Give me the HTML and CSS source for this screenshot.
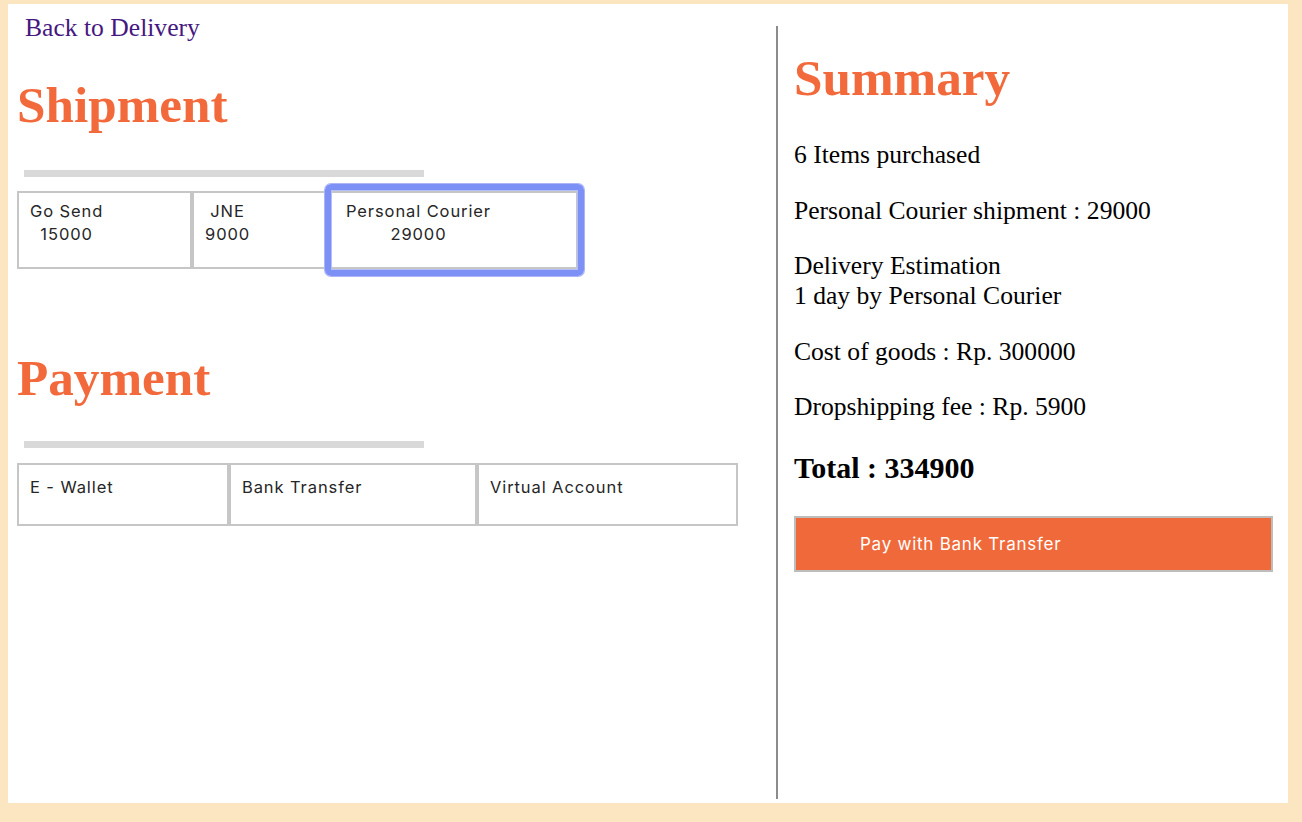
FILE: index.html
```html
<!DOCTYPE html>
<html lang="en">
<head>
<meta charset="utf-8">
<title>Checkout</title>
<link rel="stylesheet" href="styles.css">
</head>
<body>
<div class="page">
  <main class="left">
    <a class="back-link" href="#">Back to Delivery</a>
    <h1 class="title title--shipment">Shipment</h1>
    <div class="bar"></div>
    <div class="options options--ship">
      <button class="opt opt--gosend"><span class="opt-text">Go Send<br>15000</span></button>
      <button class="opt opt--jne"><span class="opt-text">JNE<br>9000</span></button>
      <button class="opt opt--courier is-focused"><span class="opt-text">Personal Courier<br>29000</span></button>
    </div>
    <h1 class="title title--payment">Payment</h1>
    <div class="bar"></div>
    <div class="options options--pay">
      <button class="opt opt--wallet">E - Wallet</button>
      <button class="opt opt--bank">Bank Transfer</button>
      <button class="opt opt--virtual">Virtual Account</button>
    </div>
  </main>
  <aside class="right">
    <h1 class="title title--summary">Summary</h1>
    <p class="line">6 Items purchased</p>
    <p class="line">Personal Courier shipment : 29000</p>
    <p class="line">Delivery Estimation<br>1 day by Personal Courier</p>
    <p class="line">Cost of goods : Rp. 300000</p>
    <p class="line">Dropshipping fee : Rp. 5900</p>
    <h3 class="total">Total : 334900</h3>
    <button class="pay-btn">Pay with Bank Transfer</button>
  </aside>
</div>
</body>
</html>
```

FILE: styles.css
```css
* { box-sizing: border-box; }

html, body {
  margin: 0;
  height: 822px;
}

body {
  background: #fce5c1;
  padding: 4px 14px 19px 8px;
  font-family: "Liberation Serif", "Times New Roman", serif;
  overflow: hidden;
}

.page {
  background: #ffffff;
  height: 799px;
  display: flex;
}

.left {
  width: 768px;
  padding-left: 9px;
  display: flex;
  flex-direction: column;
  align-items: flex-start;
}

.back-link {
  display: block;
  margin: 9px 0 0 8px;
  font-size: 25.6px;
  line-height: 30px;
  color: #461780;
  text-decoration: none;
}

.title {
  margin: 0;
  font-size: 51.2px;
  line-height: 59px;
  font-weight: bold;
  color: #f26a3c;
}

.title--shipment { margin-top: 32px; }
.title--payment { margin-top: 79px; }
.title--summary { margin-top: 22px; margin-bottom: 31px; }

.bar {
  width: 400px;
  height: 7px;
  margin-left: 7px;
  background: #d9d9d9;
}

.title--shipment + .bar { margin-top: 36px; }
.title--payment + .bar { margin-top: 34px; }

.options {
  display: flex;
}

.options--ship { margin-top: 14px; height: 78px; }
.options--pay { margin-top: 15px; height: 63px; }

.opt {
  position: relative;
  height: 100%;
  margin: 0;
  background: #ffffff;
  border: 2px solid #c6c6c6;
  font-family: "Inter", "Roboto", sans-serif;
  font-size: 16.5px;
  letter-spacing: 0.9px;
  line-height: 23px;
  color: #262626;
  text-align: left;
  padding: 7px 8px 0 11px;
  display: flex;
  align-items: flex-start;
}

.opt-text {
  display: inline-block;
  text-align: center;
}

.opt--gosend { width: 175px; }
.opt--jne { width: 138px; }
.opt--courier { width: 248px; padding-left: 14px; }

.options--pay .opt { padding-top: 11px; }
.opt--wallet { width: 212px; }
.opt--bank { width: 248px; }
.opt--virtual { width: 261px; }

.is-focused::after {
  content: "";
  position: absolute;
  top: -9px;
  left: -7px;
  right: -8px;
  bottom: -9px;
  border: 6px solid #7d90f6;
  border-radius: 6px;
  box-shadow: inset 0 0 0 1px #b4bff8, 0 0 0 1px #aab6f8;
}

.right {
  flex: 1;
  margin: 22px 0 4px;
  border-left: 2px solid #8c8c8c;
  padding: 0 15px 0 16px;
  font-size: 25.6px;
  line-height: 30px;
  color: #000;
}

.line {
  margin: 25.6px 0;
}

.title--summary + .line { margin-top: 33px; }

.total {
  margin: 29px 0 31px;
  font-size: 30px;
  line-height: 34px;
  font-weight: bold;
}

.pay-btn {
  display: block;
  width: 479px;
  height: 56px;
  margin: 0;
  background: #f0693b;
  border: 2px solid #bdbdbd;
  color: #ffffff;
  font-family: "Inter", "Roboto", sans-serif;
  font-size: 17px;
  letter-spacing: 0.75px;
  text-align: left;
  padding: 0 0 0 64px;
}
```
